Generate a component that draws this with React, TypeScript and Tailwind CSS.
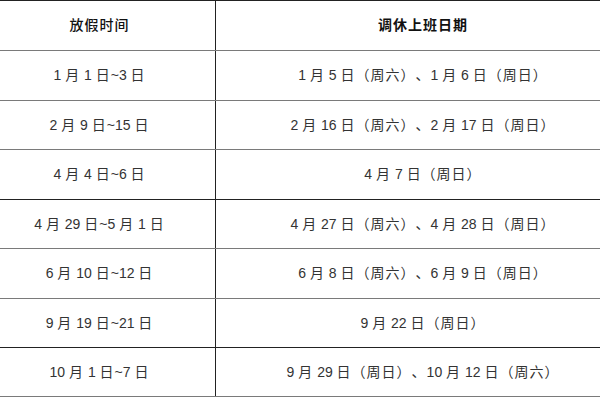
const ROWS = [
	{ left: "1 月 1 日~3 日", right: "1 月 5 日（周六）、1 月 6 日（周日）", h: "h-[50px]", line: "border-[#7a7a7a]" },
	{ left: "2 月 9 日~15 日", right: "2 月 16 日（周六）、2 月 17 日（周日）", h: "h-[49px]", line: "border-[#7a7a7a]" },
	{ left: "4 月 4 日~6 日", right: "4 月 7 日（周日）", h: "h-[50px]", line: "border-[#7a7a7a]" },
	{ left: "4 月 29 日~5 月 1 日", right: "4 月 27 日（周六）、4 月 28 日（周日）", h: "h-[49px]", line: "border-[#222]" },
	{ left: "6 月 10 日~12 日", right: "6 月 8 日（周六）、6 月 9 日（周日）", h: "h-[50px]", line: "border-[#7a7a7a]" },
	{ left: "9 月 19 日~21 日", right: "9 月 22 日（周日）", h: "h-[49px]", line: "border-[#7a7a7a]" },
	{ left: "10 月 1 日~7 日", right: "9 月 29 日（周日）、10 月 12 日（周六）", h: "h-[50px]", line: "border-[#222]" },
];

// CJK glyphs in the source sit on a 15px pitch while digits stay at 14px
const CJK_RUN = /([\u3000-\u303f\u4e00-\u9fff\uff00-\uffef]+)/;

const Mixed = ({ text }: { text: string }) => (
	<>
		{text.split(CJK_RUN).map((part, i) =>
			i % 2 ? (
				<span key={i} className="tracking-[1px]">
					{part}
				</span>
			) : (
				part
			),
		)}
	</>
);

export default function App() {
	return (
		<div
			className="w-[600px] h-[400px] overflow-hidden bg-white text-[14px] text-[#333] [text-spacing-trim:space-all]"
			style={{ fontFamily: '"Liberation Sans", "Noto Sans CJK SC", sans-serif' }}
		>
			{/* table is wider than the viewport, cropped on both sides */}
			<div className="w-[646px] -ml-[16px]">
				<div className="flex h-[50px] border-t border-[#222] text-[#111] tracking-[1px]">
					<div className="w-[232px] border-r border-[#222] flex items-center justify-center font-medium">
						放假时间
					</div>
					<div className="flex-1 flex items-center justify-center font-bold">
						调休上班日期
					</div>
				</div>
				{ROWS.map((row, i) => (
					<div
						key={i}
						className={`flex border-t ${row.line} ${row.h} ${i === ROWS.length - 1 ? "border-b border-b-[#7a7a7a]" : ""}`}
					>
						<div className="w-[232px] border-r border-[#222] flex items-center justify-center whitespace-pre">
							<Mixed text={row.left} />
						</div>
						<div className="flex-1 flex items-center justify-center whitespace-pre">
							<Mixed text={row.right} />
						</div>
					</div>
				))}
			</div>
		</div>
	);
}
